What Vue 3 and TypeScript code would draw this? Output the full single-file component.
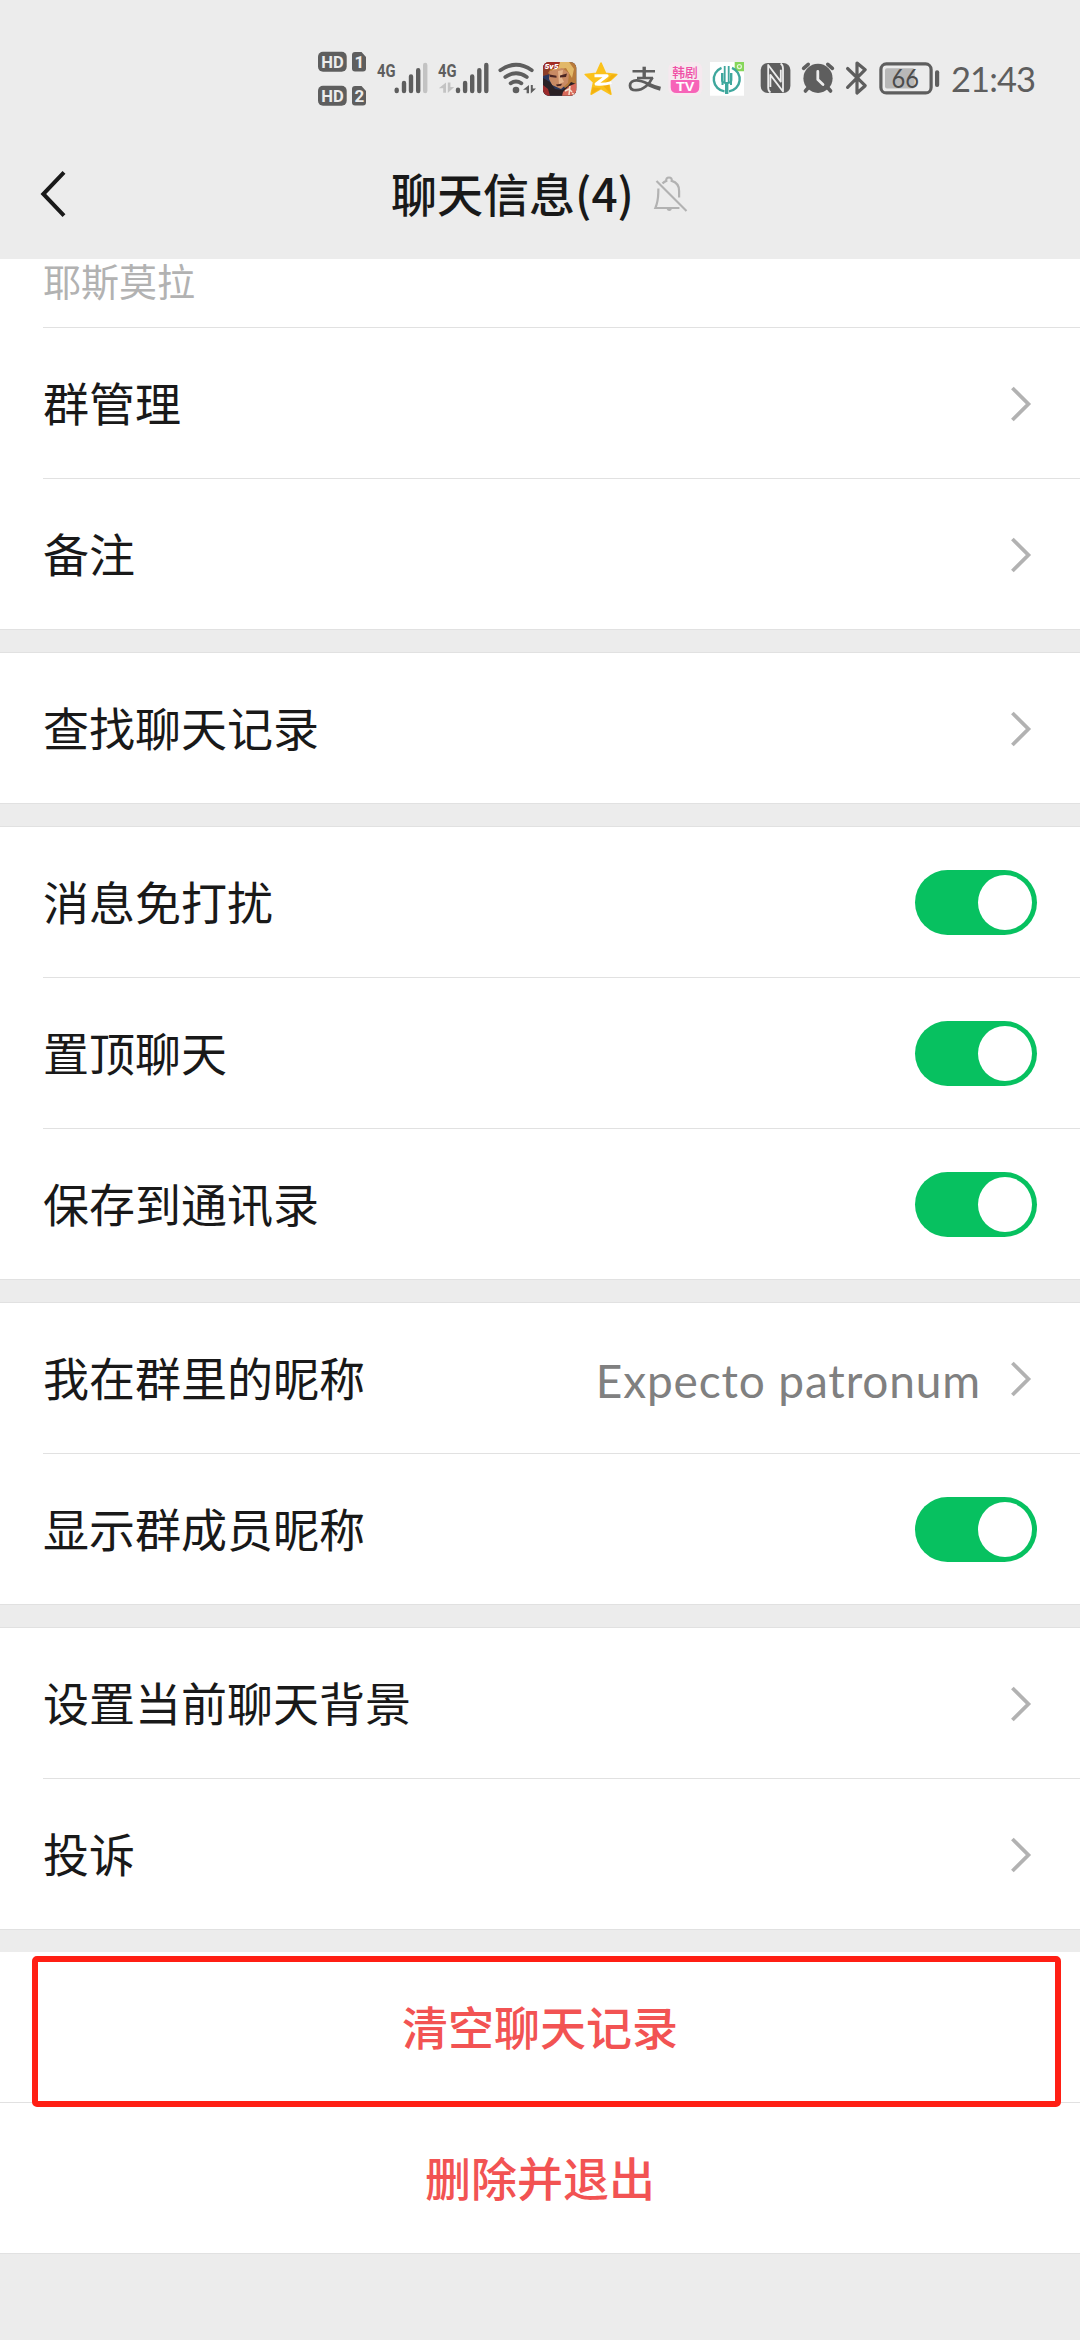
<script setup lang="ts">
type Kind = 'arrow' | 'switch'

interface Row {
  label: string
  kind: Kind
  value?: string
}

const groups: Row[][] = [
  [
    { label: '群管理', kind: 'arrow' },
    { label: '备注', kind: 'arrow' },
  ],
  [{ label: '查找聊天记录', kind: 'arrow' }],
  [
    { label: '消息免打扰', kind: 'switch' },
    { label: '置顶聊天', kind: 'switch' },
    { label: '保存到通讯录', kind: 'switch' },
  ],
  [
    { label: '我在群里的昵称', kind: 'arrow', value: 'Expecto patronum' },
    { label: '显示群成员昵称', kind: 'switch' },
  ],
  [
    { label: '设置当前聊天背景', kind: 'arrow' },
    { label: '投诉', kind: 'arrow' },
  ],
]
</script>

<template>
  <div class="screen">
    <header class="header">
      <div class="status">
        <!-- HD 1 / HD 2 -->
        <svg width="56" height="60" viewBox="316 48 56 60">
          <g fill="#5e5e5e">
            <rect x="318" y="51.7" width="28.7" height="20" rx="5" />
            <rect x="318" y="85.7" width="28.7" height="20" rx="5" />
            <path d="M355 52h6.5l4.5 5v11.5a3 3 0 0 1-3 3h-8a3 3 0 0 1-3-3V55a3 3 0 0 1 3-3z" />
            <path d="M355 86h6.5l4.5 5v11.5a3 3 0 0 1-3 3h-8a3 3 0 0 1-3-3V89a3 3 0 0 1 3-3z" />
          </g>
          <g class="badge">
            <text x="321.3" y="68" textLength="22.5" lengthAdjust="spacingAndGlyphs">HD</text>
            <text x="321.3" y="102" textLength="22.5" lengthAdjust="spacingAndGlyphs">HD</text>
            <text x="354.4" y="68">1</text>
            <text x="354.4" y="102">2</text>
          </g>
        </svg>
        <!-- SIM 1 signal -->
        <svg width="62" height="60" viewBox="372 48 62 60">
          <text class="net" x="377" y="76.7" textLength="18.5" lengthAdjust="spacingAndGlyphs">4G</text>
          <g stroke="#5e5e5e" stroke-width="4.4" stroke-linecap="round">
            <path d="M396.7 89.7v1.4M404 83v8.1M411 76.5v14.6M418.2 70.2v20.9" />
            <path stroke="#c3c3c3" d="M425.2 65v26.1" />
          </g>
        </svg>
        <!-- SIM 2 signal -->
        <svg width="62" height="60" viewBox="434 48 62 60">
          <text class="net" x="438" y="76.7" textLength="18.5" lengthAdjust="spacingAndGlyphs">4G</text>
          <path fill="#c3c3c3" d="M446 82.5v10.2h-2.8v-4.4h-4.4zM447.8 82.5h2.6v4.6h3.8l-6.4 6z" />
          <path stroke="#5e5e5e" stroke-width="4.4" stroke-linecap="round" d="M458 89.7v1.4M465.1 83v8.1M472.2 76.5v14.6M479.3 70.2v20.9M486.3 65v26.1" />
        </svg>
        <!-- Wi-Fi -->
        <svg width="43" height="60" viewBox="496 48 43 60">
          <g fill="none" stroke="#5e5e5e" stroke-width="3.8" stroke-linecap="round">
            <path d="M500.3 70.2Q516 59.4 531.8 70.2" />
            <path d="M505.3 77Q516 69.6 526.8 77" />
            <path d="M510.6 83.3Q516 79.8 521.4 83.3" />
          </g>
          <circle cx="516" cy="90" r="3.3" fill="#5e5e5e" />
          <path fill="#5e5e5e" d="M529 85v8.3h-2.4v-3.6h-3.6zM530.8 85h2v3.4h3.2l-5.2 5z" />
        </svg>
        <!-- Game -->
        <svg width="42" height="60" viewBox="539 48 42 60">
          <defs>
            <clipPath id="game"><rect x="543" y="62" width="33.3" height="33.7" rx="6" /></clipPath>
          </defs>
          <g clip-path="url(#game)">
            <path fill="#2a365c" d="M543 62h34v34h-34z" />
            <path fill="#8c3d27" d="M543 62h15l-8 12-7 2z" />
            <path fill="#b87a3a" d="M555 62h22v26l-9 4-6-8-14-11z" />
            <path fill="#e2b868" d="M557 62h12l5 7-2 9-6-10-10 2-5 3z" />
            <path fill="#c98a64" d="M550 71l12-3 7 5-1 10-7 6-9-4-3-6z" />
            <path fill="#e6b48c" d="M558 71l5-1-1 8 2 4-5 2z" />
            <path fill="#4b2523" d="M549.500 74.500l7 1.200v2l-6.500-.7zM560 75.500l7-2-1 3.500-6 .6zM556 84.500l6-.8-1 2-4 .5z" />
            <path fill="#2a2024" d="M543 78l7 4 5 7 7 1 6-4 3-4 5 2v12h-33z" />
            <path fill="#9c2a2b" d="M543 85l5 4 2 7h-7z" />
            <path fill="#d8695a" d="M563 92l6-6 8-3v13h-15z" />
            <path fill="none" stroke="#f5e3d2" stroke-width="1.5" d="M565 91l4-2 3 3M570 86l-1 9M572 93l3 2" />
            <path fill="#a12d23" d="M543 62h17l-2 7h-15z" />
            <text class="game" x="544.5" y="68.6" textLength="14" lengthAdjust="spacingAndGlyphs">5v5</text>
          </g>
        </svg>
        <!-- Star -->
        <svg width="42" height="60" viewBox="581 48 42 60">
          <path fill="#fbc21c" stroke="#fbc21c" stroke-width="1.6" stroke-linejoin="round" d="M601 63l4.6 10.4 11.2 1.1-8.400 7.700 2.500 12-9.900-5.600-9.900 5.600 2.500-12-8.400-7.700 11.200-1.100z" />
          <path fill="#f0a90c" opacity=".7" d="M608.400 82.200l8.400-7.700-5 .1-8.800 10.800 7.900 8.800zM591.100 94.200l1.400-7 8.500 1.400z" />
          <path fill="none" stroke="#fff" stroke-width="3" stroke-linejoin="round" d="M594.500 75.700h12.600l-11 8.300q7 1 15.300-1.400" />
        </svg>
        <!-- Alipay -->
        <svg width="42" height="60" viewBox="623 48 42 60">
          <g fill="none" stroke="#5e5e5e">
            <path stroke-width="2.600" d="M632.500 71.300h22.500M637 78h16" />
            <path stroke-width="3.400" d="M644.200 66.700V78" />
            <path stroke-width="2.800" d="M652.500 77.500c-3 6.500-9 12.700-16.500 12.700-4 0-6-1.800-6-4.800s2.700-5 6.500-5c6 0 10 3 14.500 5" />
            <path stroke-width="4" d="M648 84.300q6.500 3 12.500 4.400" />
          </g>
        </svg>
        <!-- Korean drama TV -->
        <svg width="41" height="60" viewBox="665 48 41 60">
          <rect x="668.3" y="62" width="34" height="33.7" rx="7" fill="#f6e9ef" />
          <text class="drama" x="672.2" y="77" textLength="25.5" lengthAdjust="spacingAndGlyphs">韩剧</text>
          <path fill="#f763b8" d="M671.5 80h26.800q1 0 1 1v6q0 6-6 6h-16.600q-6 0-6-6v-6q0-1 .8-1z" />
          <text class="tv" x="676" y="90.5" textLength="18.5" lengthAdjust="spacingAndGlyphs">TV</text>
        </svg>
        <!-- Bank -->
        <svg width="46" height="60" viewBox="706 48 46 60">
          <path fill="#fff" d="M710 62h34v33.700h-34z" />
          <path fill="#86d65a" d="M734.700 62h9.300v9.300h-7q-2.300 0-2.300-2.300z" />
          <circle cx="739.4" cy="66.6" r="2" fill="none" stroke="#e2f6d6" stroke-width="1.2" />
          <g fill="none" stroke="#3fa79d">
            <path stroke-width="2.400" d="M721.500 67.800a12.300 12.300 0 0 0 3 23.600M732 67.800a12.300 12.300 0 0 1-3 23.600" />
            <path stroke-width="2" d="M722 73v7q0 3 4.700 3t4.700-3v-7" />
            <path stroke-width="1.800" d="M724.700 66v17M728.700 66v17" />
            <path stroke-width="3.400" d="M726.700 82v12" />
            <path stroke-width="2" d="M722.500 73v12M731 73v12" />
          </g>
        </svg>
        <!-- NFC -->
        <svg width="44" height="60" viewBox="752 48 44 60">
          <rect x="760.7" y="63" width="29.7" height="30" rx="7" fill="#5e5e5e" />
          <path fill="none" stroke="#ececec" stroke-width="1.8" stroke-linejoin="round" d="M770.500 92.500q-2.300-1.500-2.300-5V65l12.600 16.600v-11.800M780.600 63.500q2.400 1.500 2.400 5V91.500l-12.600-16.600v12" />
        </svg>
        <!-- Alarm -->
        <svg width="44" height="60" viewBox="796 48 44 60">
          <circle cx="818" cy="78.3" r="14.6" fill="#5e5e5e" />
          <path stroke="#5e5e5e" stroke-width="3.6" stroke-linecap="round" d="M803.600 68.300l4.600-4M832.400 68.300l-4.600-4M808 88l-2.600 3M828 88l2.600 3" />
          <path fill="none" stroke="#ececec" stroke-width="2.8" stroke-linecap="round" stroke-linejoin="round" d="M817.800 71.500v8l5.200 5" />
        </svg>
        <!-- Bluetooth -->
        <svg width="34" height="60" viewBox="840 48 34 60">
          <path fill="none" stroke="#5e5e5e" stroke-width="3.2" stroke-linecap="round" stroke-linejoin="round" d="M847.600 68.500l17.600 17.200-8.200 7.300V63l8.200 6.700-17.600 17.600" />
        </svg>
        <!-- Battery -->
        <svg width="72" height="60" viewBox="874 48 72 60">
          <rect x="880.9" y="63.9" width="50.2" height="29" rx="5.5" fill="none" stroke="#5e5e5e" stroke-width="3.2" />
          <rect x="885" y="68.3" width="29.7" height="20.2" rx="2" fill="#b8b8b8" />
          <rect x="935" y="70.3" width="4.2" height="16.6" rx="2" fill="#5e5e5e" />
          <text class="charge" x="891.5" y="87.8" textLength="27.5" lengthAdjust="spacingAndGlyphs">66</text>
        </svg>
        <svg width="96" height="60" viewBox="946 48 96 60">
          <text class="clock" x="951" y="91.8" textLength="85" lengthAdjust="spacing">21:43</text>
        </svg>
      </div>

      <div class="nav">
        <svg class="back" width="30" height="52" viewBox="38 168 30 52">
          <path fill="none" stroke="#191919" stroke-width="4" d="M64 172.300L43.300 194 64 215.700" />
        </svg>
        <div class="title">
          <h1>聊天信息(4)</h1>
          <svg width="36" height="38" viewBox="651 177 36 38">
            <g fill="none" stroke="#b2b2b2" stroke-width="2.2">
              <path d="M660.500 185.500a9 9 0 0 1 3.800-2.600q-.5-3.400 2.700-3.400t2.700 3.400c4.500 1.300 7.400 5.200 7.400 10v6.600M656.400 190.500c-.3 9 .2 12-3 19.500h24" />
              <path d="M654.500 183l30 30" />
            </g>
            <path fill="#b2b2b2" d="M664.500 210h5.500q-.3 3-2.700 3t-2.800-3z" />
          </svg>
        </div>
      </div>
    </header>

    <main>
      <div class="note"><span>耶斯莫拉</span></div>

      <section v-for="(group, g) in groups" :key="g" class="group" :class="{ first: g === 0 }">
        <div v-for="row in group" :key="row.label" class="row">
          <span class="label">{{ row.label }}</span>
          <span v-if="row.value" class="value">{{ row.value }}</span>
          <svg v-if="row.kind === 'arrow'" class="chevron" width="22" height="38" viewBox="0 0 22 38">
            <path fill="none" stroke="#b2b2b2" stroke-width="3.800" d="M2.400 3L18.400 19 2.400 35" />
          </svg>
          <span v-else class="switch"><i></i></span>
        </div>
      </section>

      <section class="group actions">
        <div class="action">清空聊天记录<div class="mark"></div></div>
        <div class="action">删除并退出</div>
      </section>
    </main>
  </div>
</template>

<style>
body {
  background: #ececec;
}
</style>

<style scoped>
.screen {
  width: 1080px;
  height: 2340px;
  overflow: hidden;
  background: #ececec;
  color: #191919;
  font-family: 'Noto Sans CJK SC', sans-serif;
}

.header {
  height: 259px;
}

.status {
  display: flex;
  height: 60px;
  padding: 48px 0 22px 316px;
}

.status svg {
  flex: none;
}

.badge {
  fill: #ececec;
  font: 700 17px Roboto, sans-serif;
}

.net {
  fill: #5e5e5e;
  font: 700 19px Roboto, sans-serif;
}

.game {
  fill: #fff;
  font: italic 900 8px Roboto, sans-serif;
}

.drama {
  fill: #f04fa6;
  font: 500 13px 'Noto Sans CJK SC', sans-serif;
}

.tv {
  fill: #fff;
  font: 700 12px 'Liberation Sans', sans-serif;
}

.charge {
  fill: #4c4c4c;
  font: 400 26.5px Lato, sans-serif;
}

.clock {
  fill: #5e5e5e;
  font: 400 34.5px Lato, sans-serif;
}

.nav {
  display: grid;
  grid-template-columns: 1fr auto 1fr;
  align-items: center;
  height: 128px;
}

.back {
  margin-left: 38px;
}

.title {
  display: flex;
  align-items: center;
  gap: 19px;
}

h1 {
  margin: 0;
  padding-bottom: 3px;
  font-size: 46px;
  font-weight: 500;
  line-height: 63px;
}

.note {
  height: 68px;
  background: #fff;
  color: #b2b2b2;
  font-size: 38px;
  line-height: 42px;
}

.note span {
  display: block;
  margin-left: 43px;
}

.group {
  margin-top: 22px;
  border-top: 1px solid #e1e1e1;
  border-bottom: 1px solid #e1e1e1;
  background: #fff;
}

.group.first {
  margin-top: 0;
  border-top: 0;
}

.row {
  display: flex;
  align-items: center;
  height: 150px;
  margin-left: 43px;
  padding-right: 43px;
}

.row + .row,
.first .row {
  border-top: 1px solid #e1e1e1;
}

.label {
  flex: 1;
  padding-bottom: 3px;
  font-size: 46px;
  line-height: 63px;
}

.value {
  margin: 5px 29px 0 0;
  color: #808080;
  font: 400 46px/66px Lato, sans-serif;
  letter-spacing: 0.85px;
}

.chevron {
  margin: 1px 5px 0 0;
}

.switch {
  display: flex;
  justify-content: flex-end;
  width: 112px;
  height: 55px;
  margin-top: 1px;
  padding: 5px;
  border-radius: 33px;
  background: #07c160;
}

.switch i {
  width: 54px;
  height: 55px;
  border-radius: 50%;
  background: #fff;
}

.actions {
  border-top: 0;
}

.action {
  position: relative;
  height: 150px;
  color: #f25353;
  font-size: 46px;
  font-weight: 500;
  line-height: 147px;
  text-align: center;
}

.action + .action {
  border-top: 1px solid #e1e1e1;
}

.mark {
  position: absolute;
  z-index: 1;
  top: 4px;
  left: 32px;
  width: 1017px;
  height: 139px;
  border: 6px solid #ff1f14;
  border-radius: 5px;
}
</style>
